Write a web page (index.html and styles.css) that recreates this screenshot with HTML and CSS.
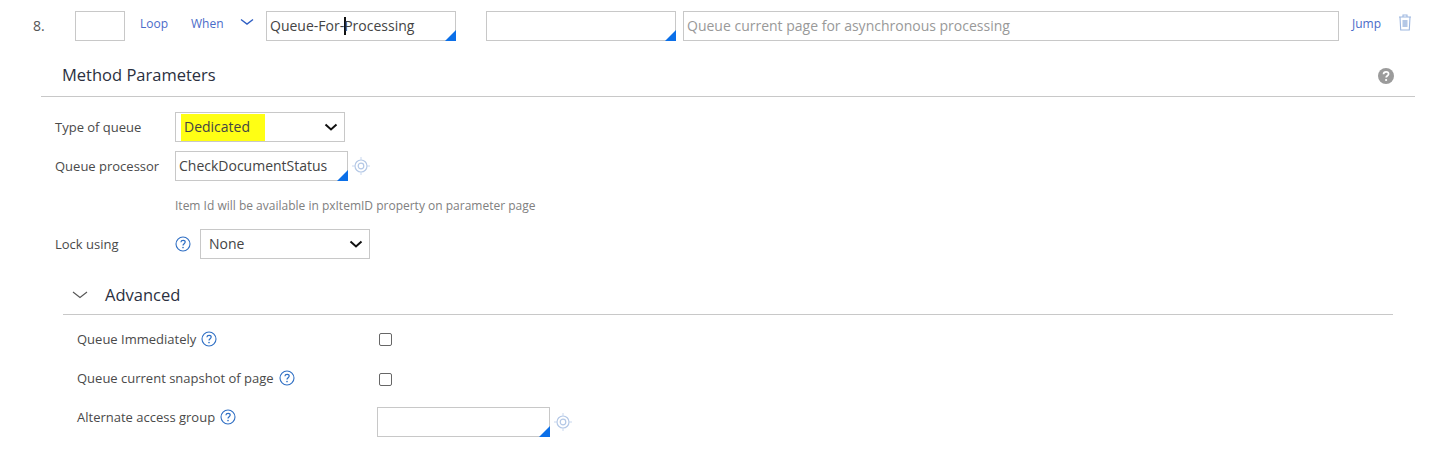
FILE: index.html
```html
<!DOCTYPE html>
<html lang="en">
<head>
    <meta charset="UTF-8">
    <title>Queue-For-Processing</title>
    <link rel="stylesheet" href="styles.css">
</head>
<body>
    <svg class="sprites" width="0" height="0">
        <symbol id="help" viewBox="0 0 16 16">
            <circle cx="8" cy="8" r="7" fill="none" stroke="#2f6fc4" stroke-width="1.1"/>
            <path d="M5.9 6.2C6 4.9 7 4.3 8.1 4.3c1.2 0 2.1.8 2.1 1.8 0 1.6-2.2 1.6-2.2 3.4" fill="none" stroke="#2f6fc4" stroke-width="1.2"/>
            <circle cx="8" cy="11.6" r=".8" fill="#2f6fc4"/>
        </symbol>
        <symbol id="target" viewBox="0 0 18 18">
            <circle cx="9" cy="9" r="6" fill="none" stroke="#b4c8e6" stroke-width="1.2"/>
            <circle cx="9" cy="9" r="2.8" fill="none" stroke="#b4c8e6" stroke-width="1.2"/>
            <path d="M9 0v3M9 15v3M0 9h3M15 9h3" stroke="#c8d7ee" stroke-width="1"/>
        </symbol>
        <symbol id="caret" viewBox="0 0 14 8">
            <path d="M1.5 1.5 7 6.5l5.5-5" fill="none" stroke="#111" stroke-width="2"/>
        </symbol>
    </svg>

    <div class="step-row">
        <div class="step-num">8.</div>
        <div class="box box-order"></div>
        <a class="link link-loop">Loop</a>
        <a class="link link-when">When</a>
        <svg class="when-chevron" width="14" height="8" viewBox="0 0 14 8"><path d="M1 1.5 7 6l6-4.5" fill="none" stroke="#2f5fc4" stroke-width="1.4"/></svg>
        <div class="box box-method smart">Queue-For-<span class="text-cursor"></span>Processing</div>
        <div class="box box-step smart"></div>
        <div class="box box-desc">Queue current page for asynchronous processing</div>
        <a class="link link-jump">Jump</a>
        <svg class="trash" width="14" height="17" viewBox="0 0 14 17">
            <path d="M1 3h12M5 3V1h4v2M2 3l.7 13h8.6L12 3" fill="none" stroke="#9db7e0" stroke-width="1.1"/>
            <rect x="4.5" y="6" width="5" height="7" fill="#b4c8e6"/>
        </svg>
    </div>

    <div class="section-head">
        <h2 class="section-title">Method Parameters</h2>
        <svg class="section-help" width="16" height="16" viewBox="0 0 16 16">
            <circle cx="8" cy="8" r="8" fill="#9b9b9b"/>
            <path d="M5.5 6.2C5.6 4.6 6.8 3.8 8.1 3.8c1.5 0 2.5 1 2.5 2.1 0 1.8-2.5 1.8-2.5 3.7" fill="none" stroke="#fff" stroke-width="1.7"/>
            <circle cx="8.1" cy="12" r="1.1" fill="#fff"/>
        </svg>
    </div>

    <div class="params">
        <div class="field field-type">
            <label class="field-label">Type of queue</label>
            <div class="box select select-type">
                <span class="marker">Dedicated</span>
                <svg class="select-caret" width="14" height="8"><use href="#caret"/></svg>
            </div>
        </div>
        <div class="field field-processor">
            <label class="field-label">Queue processor</label>
            <div class="box box-rule smart">CheckDocumentStatus</div>
            <svg class="target" width="18" height="18"><use href="#target"/></svg>
        </div>
        <div class="field-note">Item Id will be available in pxItemID property on parameter page</div>
        <div class="field field-lock">
            <label class="field-label">Lock using</label>
            <svg class="lock-help" width="16" height="16"><use href="#help"/></svg>
            <div class="box select select-lock">
                <span class="select-value">None</span>
                <svg class="select-caret" width="14" height="8"><use href="#caret"/></svg>
            </div>
        </div>
    </div>

    <div class="advanced">
        <div class="advanced-head">
            <svg class="advanced-chevron" width="16" height="8" viewBox="0 0 16 8"><path d="M1 1 8 6.5 15 1" fill="none" stroke="#555" stroke-width="1.1"/></svg>
            <h2 class="section-title">Advanced</h2>
        </div>
        <div class="adv-row adv-immediate">
            <div class="adv-label">Queue Immediately <svg width="16" height="16"><use href="#help"/></svg></div>
            <span class="check"></span>
        </div>
        <div class="adv-row adv-snapshot">
            <div class="adv-label">Queue current snapshot of page <svg width="16" height="16"><use href="#help"/></svg></div>
            <span class="check"></span>
        </div>
        <div class="adv-row adv-access">
            <div class="adv-label">Alternate access group <svg width="16" height="16"><use href="#help"/></svg></div>
            <div class="box box-rule smart"></div>
            <svg class="target" width="18" height="18"><use href="#target"/></svg>
        </div>
    </div>
</body>
</html>
```

FILE: styles.css
```css
body {
    margin: 0;
    font-family: "Open Sans", Arial, sans-serif;
    font-size: 13px;
    color: #4a4a4a;
    background-color: #fff;
}

.sprites {
    display: block;
    height: 0;
}

.box {
    box-sizing: border-box;
    height: 30px;
    border: 1px solid #c8c8c8;
    background-color: #fff;
    display: flex;
    align-items: center;
    flex: none;
    white-space: pre;
}

/* blue corner on the smart prompt inputs */
.smart {
    position: relative;
    font-size: 14px;
    color: #444;
    padding: 0 0 2px 3px;
}

.smart::after {
    content: "";
    position: absolute;
    right: -1px;
    bottom: -1px;
    width: 0;
    height: 0;
    border-left: 11px solid transparent;
    border-bottom: 11px solid #0b6fe8;
}

.link {
    font-size: 12px;
    color: #4a6bc9;
}

.step-row {
    display: flex;
    align-items: flex-start;
    padding: 11px 0 0 33px;
    height: 30px;
}

.step-num {
    width: 42px;
    font-size: 14px;
    line-height: 30px;
    color: #555;
}

.box-order {
    width: 50px;
}

.link-loop {
    margin-left: 15px;
    width: 51px;
    line-height: 25px;
}

.link-when {
    width: 49px;
    line-height: 25px;
}

.when-chevron {
    margin-top: 7px;
}

.box-method {
    width: 190px;
    margin-left: 12px;
}

.text-cursor {
    display: inline-block;
    width: 2px;
    height: 18px;
    margin: 2px -2px 0 0;
    background-color: #111;
}

.box-step {
    width: 190px;
    margin-left: 30px;
}

.box-desc {
    width: 656px;
    margin-left: 7px;
    padding: 0 0 2px 3px;
    font-size: 14px;
    color: #999;
}

.link-jump {
    margin-left: 13px;
    width: 46px;
    line-height: 26px;
}

.trash {
    margin-top: 3px;
}

.section-head {
    display: flex;
    justify-content: space-between;
    align-items: center;
    box-sizing: border-box;
    width: 1374px;
    height: 56px;
    margin: 0 0 0 41px;
    padding: 13px 21px 0 21px;
    border-bottom: 1px solid #c8c8c8;
}

.section-head .section-title {
    padding-bottom: 2px;
}

.section-help {
    margin-top: 2px;
}

.section-title {
    margin: 0;
    font-size: 16.5px;
    font-weight: 400;
    color: #2b3040;
}

.params {
    padding: 15px 0 0 55px;
}

.field {
    display: flex;
    align-items: center;
}

.field-label {
    width: 120px;
    flex: none;
}

.select {
    justify-content: space-between;
    font-size: 14px;
    color: #444;
    width: 170px;
    padding: 0 6px 0 5px;
}

.select-lock {
    padding-left: 8px;
}

.select-value {
    padding-bottom: 1px;
}

.marker {
    display: block;
    box-sizing: border-box;
    width: 84px;
    height: 27px;
    padding-left: 3px;
    line-height: 26px;
    background-color: #ffff14;
}

.select-caret {
    flex: none;
}

.field-processor {
    margin-top: 9px;
}

.box-rule {
    width: 173px;
}

.target {
    margin-left: 4px;
    flex: none;
}

.field-note {
    margin: 16px 0 0 120px;
    font-size: 12px;
    line-height: 18px;
    color: #808080;
}

.field-lock {
    margin-top: 14px;
}

.lock-help {
    margin-left: 0;
    margin-right: 9px;
}

.advanced {
    width: 1330px;
    margin: 23px 0 0 63px;
}

.advanced-head {
    display: flex;
    align-items: center;
    box-sizing: border-box;
    height: 33px;
    padding-bottom: 7px;
    border-bottom: 1px solid #c8c8c8;
}

.advanced-chevron {
    margin: 0 17px 0 9px;
}

.adv-row {
    display: flex;
    align-items: center;
}

.adv-label {
    width: 314px;
    flex: none;
    padding-left: 14px;
    box-sizing: border-box;
    display: flex;
    align-items: center;
    gap: 5px;
}

.adv-row .check {
    margin-left: 2px;
}

.check {
    display: block;
    box-sizing: border-box;
    width: 13px;
    height: 13px;
    border: 1px solid #666;
    border-radius: 2px;
}

.adv-immediate {
    margin-top: 15px;
}

.adv-snapshot {
    margin-top: 21px;
}

.adv-snapshot .check {
    margin-top: 2px;
}

.adv-access {
    margin-top: 20px;
}

.adv-access .adv-label {
    padding-bottom: 10px;
}
```
